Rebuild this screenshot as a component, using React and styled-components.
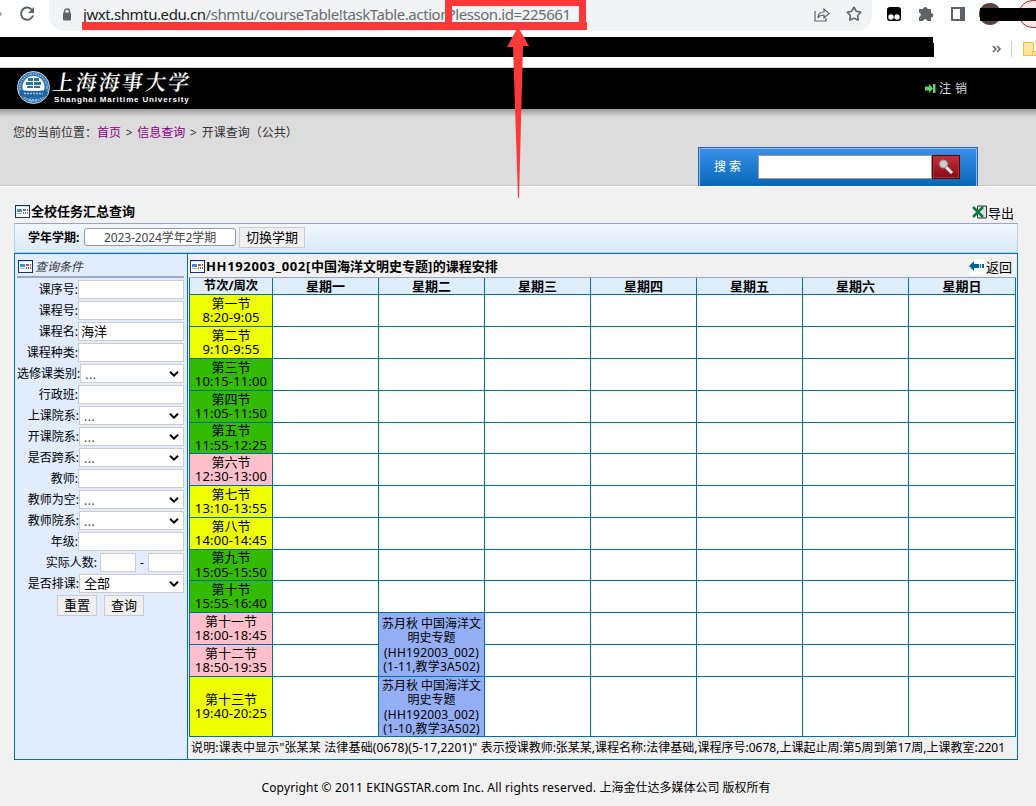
import React from "react";
import styled, { createGlobalStyle } from "styled-components";
import { Star } from "lucide-react";

const Global = createGlobalStyle`
  *{box-sizing:border-box}
  body{margin:0;background:#f1f1f1;color:#000;font-family:"Noto Sans","Noto Sans CJK SC",sans-serif;font-size:12px;line-height:14px}
`;
const Page = styled.div`width:1036px;height:806px;position:relative;overflow:hidden;display:flex;flex-direction:column;`;
const AddressBar = styled.div`height:37px;background:#fff;display:flex;align-items:flex-start;flex:none;`;
const NavIcon = styled.div`width:49px;height:31px;flex:none;display:flex;`;
const UrlPill = styled.div`width:823px;height:31px;background:#f1f3f4;border-radius:0 0 16px 16px;display:flex;align-items:center;padding:0 10px 3px 12px;flex:none;`;
const Url = styled.div`font:15px/20px "Noto Sans",sans-serif;color:#696c70;margin-left:10px;white-space:nowrap;flex:1;letter-spacing:-.42px;b{font-weight:400;color:#202124}`;
const PillIcons = styled.div`display:flex;gap:16px;align-items:center;`;
const Tools = styled.div`display:flex;flex:1;height:31px;`;
const Bookmarks = styled.div`height:31px;background:#fff;border-bottom:1px solid #d5d5d5;display:flex;flex:none;`;
const Redaction = styled.div`width:934px;height:20px;background:#000;clip-path:polygon(0 0,933px 0,933px 6px,100% 6px,100% 100%,0 100%);`;
const Banner = styled.header`height:41px;background:#000;display:flex;flex:none;padding-left:16px;`;
const CrestIcon = styled.svg`margin-top:2px;flex:none;`;
const School = styled.div`display:flex;flex-direction:column;margin-left:3px;width:150px;color:#fff;`;
const SchoolName = styled.div`font:600 21px/27px "Noto Serif CJK SC","Noto Sans CJK SC",sans-serif;transform:skewX(-8deg);letter-spacing:2.1px;white-space:nowrap;`;
const SchoolEn = styled.div`font:bold 8px/10px "Liberation Sans",sans-serif;letter-spacing:.84px;white-space:nowrap;padding-left:1px;`;
const Logout = styled.div`margin-left:auto;width:111px;display:flex;align-items:center;gap:3px;color:#ddd;letter-spacing:.4px;`;
const Crumbs = styled.div`height:78px;flex:none;background:linear-gradient(#999,#bbb 4px,#d2d2d2 7px,#dcdcdc 9px);border-bottom:1px solid #fff;box-shadow:inset 0 -1px #c8c8c8;display:flex;justify-content:space-between;color:#333;`;
const Trail = styled.div`padding:17px 0 0 13px;white-space:nowrap;word-spacing:1.6px;a{color:#808;text-decoration:none}`;
const Search = styled.div`width:280px;height:39px;margin:38px 58px 0 0;border:1px solid #2b62ac;border-bottom:0;box-shadow:inset 1px 1px #8abaf0,inset -1px 0 #8abaf0;background:linear-gradient(#3b8fe9,#0868b7);display:flex;padding:7px 0 0 15px;color:#fff;`;
const SearchLabel = styled.div`width:44px;line-height:23px;`;
const SearchField = styled.div`width:174px;height:24px;background:#fff;border:1px solid #999;`;
const SearchButton = styled.div`width:28px;height:24px;background:linear-gradient(#c5303a,#850d17);border:1px solid #600;box-shadow:inset 0 0 0 1px #a33;display:grid;place-items:center;`;
const Main = styled.main`margin:0 18px 0 14px;display:flex;flex-direction:column;flex:1;`;
const TitleRow = styled.div`height:${p => p.$h}px;display:flex;justify-content:space-between;align-items:flex-start;`;
const Title = styled.div`display:flex;align-items:center;gap:1px;font-weight:700;font-size:13px;line-height:15px;padding:${p => p.$pad};white-space:nowrap;`;
const Action = styled.div`display:flex;align-items:center;gap:0;font-size:13px;padding:${p => p.$pad};`;
const Term = styled.div`height:30px;border:1px solid #b7d2ea;border-top-color:#99a3c4;background:linear-gradient(#eff6fc,#dcebf7);display:flex;align-items:center;padding:0 0 2px 13px;`;
const TermLabel = styled.div`width:56px;font-weight:700;white-space:nowrap;padding-top:1px;`;
const TermBox = styled.div`width:152px;height:18px;border:1px solid #999;border-radius:3px;background:#fff;text-align:center;color:#444;line-height:17px;letter-spacing:-.1px;`;
const Button = styled.div`height:21px;width:${p => p.$w}px;border:1px solid #ccc;background:#efefef;text-align:center;font-size:13px;line-height:19px;margin-left:${p => p.$ml || 0}px;`;
const Body = styled.div`width:1004px;height:507px;border:1px solid #006cb2;display:flex;flex:none;`;
const Sidebar = styled.aside`width:173px;background:#e1ecff;border-right:1px solid #006cb2;padding:0 3px 0 2px;`;
const SideTitle = styled.div`height:24px;border-bottom:2px solid #9da9c9;display:flex;align-items:center;gap:2px;font-style:italic;color:#333;padding:3px 0 0 1px;margin-bottom:1px;`;
const Field = styled.div`height:21px;display:flex;align-items:center;justify-content:flex-end;white-space:nowrap;`;
const ButtonRow = styled(Field)`padding-right:40px;margin-top:1px;`;
const Box = styled.div`width:${p => p.$w}px;height:19px;border:1px solid #ccc;background:#fff;font-size:13px;line-height:17px;padding:0 4px 0 ${p => p.$select ? 4 : 2}px;margin-left:${p => p.$ml || 0}px;display:flex;justify-content:space-between;align-items:center;`;
const Dots = styled.span`font-size:12px;color:#444;letter-spacing:.5px;padding-top:2px;`;
const Dash = styled.span`width:12px;text-align:center;`;
const Content = styled.section`width:829px;padding:0 2px 0 1px;`;
const Grid = styled.div`display:grid;width:827px;height:460px;grid-template-columns:82px repeat(6,105px) 106px;grid-template-rows:16px 31px 31px 31px 31px 30px 31px 31px 31px 30px 31px 31px 31px 59px;gap:1px;padding:1px;background:linear-gradient(#99a3c4 1px,#006cb2 1px);`;
const Head = styled.div`background:#deedf7;font-weight:700;font-size:${p => p.$small ? 12.3 : 13}px;line-height:16px;text-align:center;white-space:nowrap;`;
const Slot = styled.div`background:${p => p.$c};font-size:13px;line-height:14.500px;display:flex;flex-direction:column;align-items:center;justify-content:center;padding-bottom:1px;grid-column:1;grid-row:${p => p.$r};white-space:nowrap;`;
const Time = styled.span`letter-spacing:.16px;`;
const Cell = styled.div`background:${p => p.$busy ? "#94aef3" : "#fff"};grid-column:${p => p.$col};grid-row:${p => p.$r} / span ${p => p.$span || 1};display:flex;flex-direction:column;justify-content:center;align-items:center;line-height:14.250px;padding-top:${p => p.$busy ? 2 : 0}px;white-space:nowrap;`;
const Line = styled.span`letter-spacing:${p => p.$ls || 0}px;`;
const Note = styled.div`white-space:nowrap;line-height:21px;padding-left:2px;`;
const Footer = styled.footer`text-align:center;padding:21px 0 0 0;white-space:nowrap;`;
const Overlay = styled.svg`position:absolute;left:0;top:0;pointer-events:none;`;

const SheetIcon = () => <svg width="15" height="13" viewBox="0 0 15 13" shapeRendering="crispEdges"><path fill="#123563" d="M0 0h15v13H0z" /><path fill="#fff" d="M1 1h13v11H1z" /><path fill="#cfe0f0" d="M1 1h13v1H1z" /><path fill="#4a8bd0" d="M2 4h5v3H2z" /><path fill="#aab4c0" d="M2 8h5v1H2z" /><path fill="#d44" d="M8 4h2v2H8zM12 4h1v2h-1zM10 7h1v2h-1z" /><path fill="#3a9a88" d="M10 4h1v2h-1zM8 7h1v2H8zM12 7h1v2h-1z" /></svg>;
const Chevron = () => <svg width="10" height="6" viewBox="0 0 10 6"><path d="M1 .8 5 4.6 9 .8" fill="none" stroke="#000" strokeWidth="2" /></svg>;
const Crest = () => <CrestIcon width="34" height="35" viewBox="0 0 34 35"><circle cx="17.500" cy="17.500" r="16" fill="#2c72ad" stroke="#c8dced" /><circle cx="17.500" cy="17.500" r="13.500" fill="none" stroke="#83b1d6" strokeWidth="2" strokeDasharray="1.500 1" /><circle cx="17.500" cy="17" r="11" fill="#fff" /><path d="M12 8h5v3h-5zm6 0h5v3h-5zM10 12h7v3h-7zm8 0h7v3h-7zM11 16h6v2h-6zm7 0h6v2h-6z" fill="#2c72ad" /><path d="M4 20q13 2 27 0v6q-13 4-27 0z" fill="#1f649e" /><path d="M8 23.500h19M13 30h9" stroke="#a9cbe6" strokeWidth="1.500" strokeDasharray="2 1" /></CrestIcon>;

const fields = [["课序号", "i"], ["课程号", "i"], ["课程名", "i", "海洋"], ["课程种类", "i"], ["选修课类别", "s"], ["行政班", "i"], ["上课院系", "s"], ["开课院系", "s"], ["是否跨系", "s"], ["教师", "i"], ["教师为空", "s"], ["教师院系", "s"], ["年级", "i"]];
const Y = "#eeff00", G = "#33bb00", P = "#ffc0cb";
const slots = [["第一节", "8:20-9:05", Y], ["第二节", "9:10-9:55", Y], ["第三节", "10:15-11:00", G], ["第四节", "11:05-11:50", G], ["第五节", "11:55-12:25", G], ["第六节", "12:30-13:00", P], ["第七节", "13:10-13:55", Y], ["第八节", "14:00-14:45", Y], ["第九节", "15:05-15:50", G], ["第十节", "15:55-16:40", G], ["第十一节", "18:00-18:45", P], ["第十二节", "18:50-19:35", P], ["第十三节", "19:40-20:25", Y]];
const days = ["星期一", "星期二", "星期三", "星期四", "星期五", "星期六", "星期日"];

const Lesson = ({ row, span, weeks }) => <Cell $busy $col={3} $r={row} $span={span}><Line>苏月秋 中国海洋文</Line><Line>明史专题</Line><Line $ls={0.2}>(HH192003_002)</Line><Line $ls={0.18}>({weeks},教学3A502)</Line></Cell>;

export default function App() {
  return <Page><Global />
    <AddressBar>
      <NavIcon><svg width="49" height="31"><circle cx="0" cy="14" r="2" fill="#aaa" /><path d="M32.2 10.2A6.1 6.1 0 1 0 33 15.5" fill="none" stroke="#5f6368" strokeWidth="2" /><path d="M34 7v6h-6z" fill="#5f6368" /></svg></NavIcon>
      <UrlPill><svg width="12" height="13" viewBox="0 0 12 13"><path d="M3.500 5V3.500a2.500 2.500 0 0 1 5 0V5" fill="none" stroke="#5f6368" strokeWidth="1.400" /><rect x="2" y="4.500" width="8" height="8" rx="1" fill="#5f6368" /></svg>
        <Url><b>jwxt.shmtu.edu.cn</b>/shmtu/courseTable!taskTable.action?lesson.id=225661</Url>
        <PillIcons><svg width="16" height="15" viewBox="0 0 16 15" fill="none" stroke="#5f6368" strokeWidth="1.200"><path d="M1 4v10h11v-3M4 11c0-4 2-6 6-6V2l5 4.500L10 11V8C7 8 5 9 4 11z" /></svg><Star size={16} color="#5f6368" strokeWidth={2.4} /></PillIcons></UrlPill>
      <Tools><svg width="164" height="31"><rect x="15" y="7" width="14" height="14" rx="3" fill="#000" /><circle cx="19" cy="17" r="2.700" fill="#fff" /><circle cx="25" cy="17" r="2.700" fill="#fff" /><path d="M47 9h4a2.400 2.400 0 0 1 4.700 0H59v4a2.300 2.300 0 0 1 0 4.600V21h-3.500a2.300 2.300 0 0 0-4.500 0H47v-4a2.300 2.300 0 0 0 0-4.500z" fill="#5f6368" /><path d="M80 8h12v12H80z" fill="none" stroke="#5f6368" strokeWidth="2" /><path d="M88 8h4v12h-4z" fill="#5f6368" /><circle cx="118" cy="14" r="11" fill="#5d4037" /><rect x="147" y=".5" width="50" height="27" rx="13.500" fill="#fce8e6" stroke="#c5221f" /><path d="M108 8h56v13h-56z" /></svg></Tools>
    </AddressBar>
    <Bookmarks><Redaction /><svg width="102" height="30"><path d="m59 9 3 3-3 3m4-6 3 3-3 3" fill="none" stroke="#5f6368" strokeWidth="1.500" /><path d="M77.500 4v16" stroke="#ccc" /><path d="M89.500 5.500H99.500V18.500H89.500z" fill="#ffe69b" stroke="#e8c345" /><path d="M98.500 14.500h5v4h-5z" fill="#ffe69b" stroke="#e8c345" /></svg></Bookmarks>
    <Banner><Crest /><School><SchoolName>上海海事大学</SchoolName><SchoolEn>Shanghai Maritime University</SchoolEn></School>
      <Logout><svg width="11" height="9"><path d="M0 2.500h4V0l4 4.500L4 9V6.500H0zM8 0h2.500v9H8z" fill="#5fd35f" /></svg>注 销</Logout></Banner>
    <Crumbs><Trail>您的当前位置：<a>首页</a> &gt; <a>信息查询</a> &gt; 开课查询（公共）</Trail>
      <Search><SearchLabel>搜 索</SearchLabel><SearchField /><SearchButton><svg width="16" height="16"><path d="m7 7 7 7" stroke="#eee" strokeWidth="3" /><circle cx="5.500" cy="5" r="4" fill="#ccc" stroke="#999" /></svg></SearchButton></Search></Crumbs>
    <Main>
      <TitleRow $h={36}><Title $pad="17px 0 0 1px"><SheetIcon />全校任务汇总查询</Title><Action $pad="18px 4px 0 0"><svg width="16" height="15"><path d="M5.500 1h9v12h-9z" fill="#dde" stroke="#333" /><path d="m1 2 10 10M11 2 1 12" stroke="#087a3c" strokeWidth="2.500" /></svg>导出</Action></TitleRow>
      <Term><TermLabel>学年学期:</TermLabel><TermBox>2023-2024学年2学期</TermBox><Button $w={66} $ml={3}>切换学期</Button></Term>
      <Body>
        <Sidebar><SideTitle><SheetIcon />查询条件</SideTitle>
          {fields.map(([n, k, v]) => <Field key={n}>{n}:<Box $w={k === "s" ? 105 : 106} $select={k === "s"}>{k === "s" ? <><Dots>...</Dots><Chevron /></> : v}</Box></Field>)}
          <Field>实际人数:<Box $w={36} $ml={3} /><Dash>-</Dash><Box $w={36} /></Field>
          <Field>是否排课:<Box $w={105} $select>全部<Chevron /></Box></Field>
          <ButtonRow><Button $w={40}>重置</Button><Button $w={40} $ml={7}>查询</Button></ButtonRow>
        </Sidebar>
        <Content>
          <TitleRow $h={23}><Title $pad="5px 0 0 1px"><SheetIcon /><span><Line $ls={0.65}>HH192003_002[</Line>中国海洋文明史专题<Line $ls={0.6}>]</Line>的课程安排</span></Title><Action $pad="5px 3px 0 0"><svg width="16" height="16"><path fill="#fff" d="M0 0h16v16H0z" /><path fill="#069" d="M0 7l5-5v3h5v4H5v3zM11 5h1v4h-1zM13 5h2v4h-2z" /></svg>&#8202;返回</Action></TitleRow>
          <Grid><Head $small>节次/周次</Head>{days.map(d => <Head key={d}>{d}</Head>)}
            {slots.map(([n, t, c], i) => <React.Fragment key={n}><Slot $c={c} $r={i + 2}><span>{n}</span><Time>{t}</Time></Slot>
              {days.map((d, j) => (j === 1 && i >= 10) ? null : <Cell key={d} $col={j + 2} $r={i + 2} />)}</React.Fragment>)}
            <Lesson row={12} span={2} weeks="1-11" /><Lesson row={14} span={1} weeks="1-10" />
          </Grid>
          <Note><Line $ls={0.15}>说明:课表中显示"张某某 法律基础(0678)(5-17,2201)" </Line>表示授课教师:张某某,课程名称:法律基础,课程序号:0678,上课起止周:第5周到第17周,上课教室:2201</Note>
        </Content>
      </Body>
      <Footer><Line $ls={0.17}>Copyright © 2011 EKINGSTAR.com Inc. All rights reserved. </Line>上海金仕达多媒体公司 版权所有</Footer>
    </Main>
    <Overlay width="1036" height="210"><path d="M82 22h505v8H82z" fill="#fc3838" /><path d="M448.500 2.500H582.500V26H448.500z" fill="none" stroke="#fc3838" strokeWidth="7" /><path d="M518 27 529 46h-6L519 198h-1L513 47h-6z" fill="#fc3838" /></Overlay>
  </Page>;
}
